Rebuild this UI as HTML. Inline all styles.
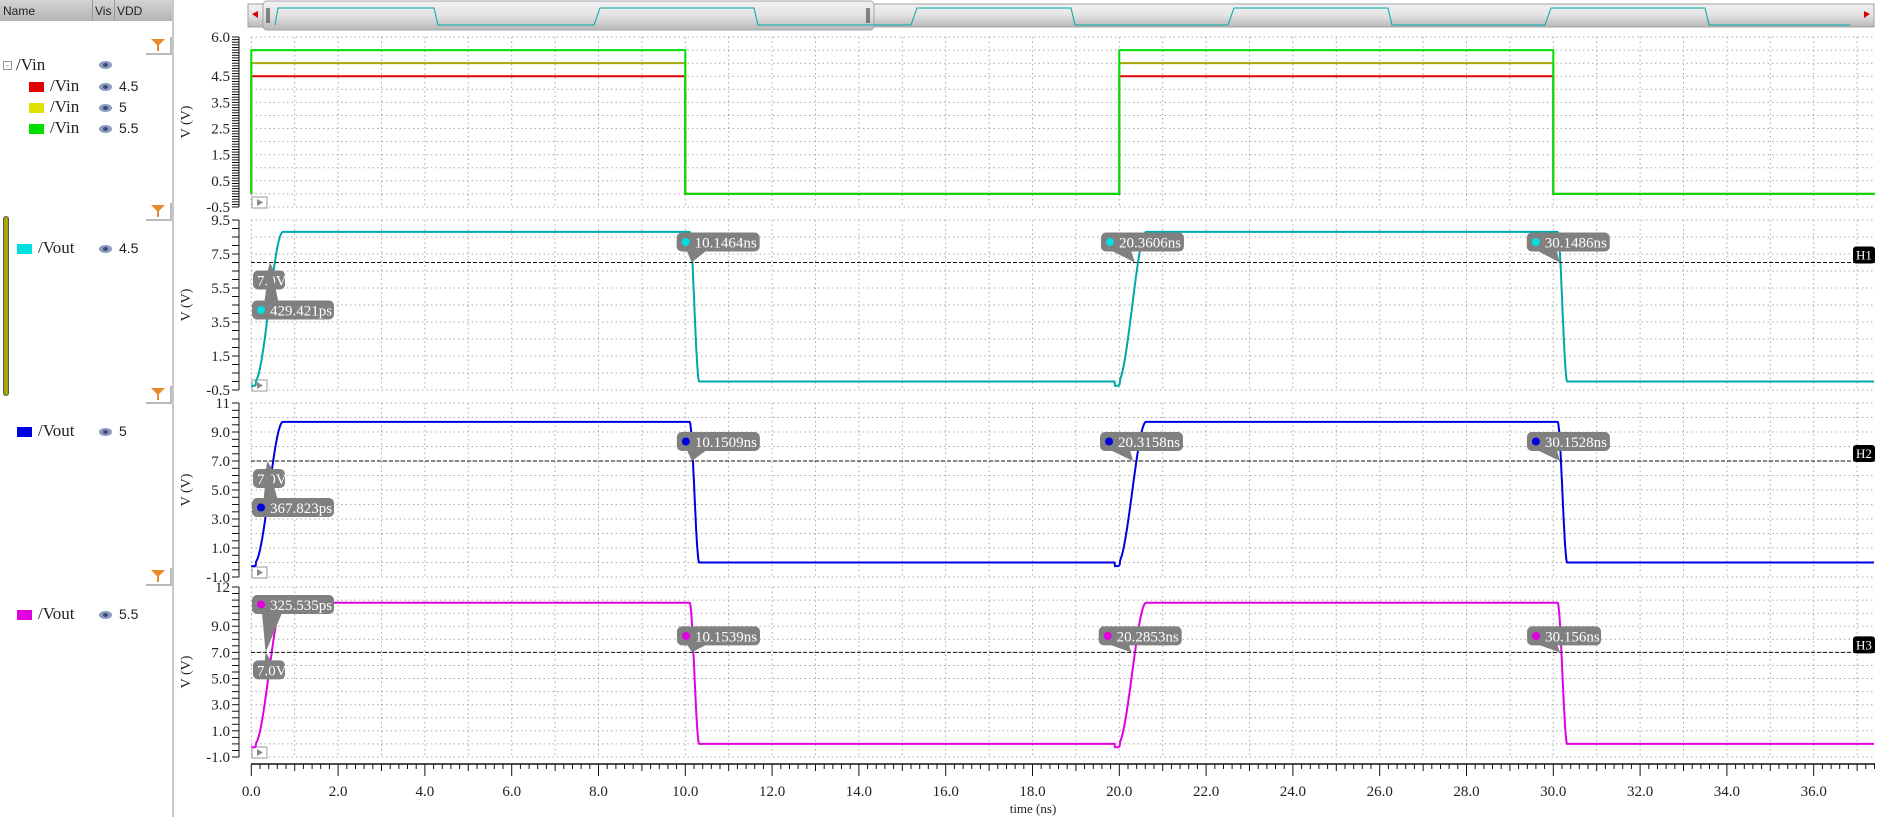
<!DOCTYPE html>
<html><head><meta charset="utf-8">
<style>
html,body{margin:0;padding:0;background:#fff;width:1902px;height:817px;overflow:hidden;position:relative}
#left{position:absolute;left:0;top:0;width:174px;height:817px;border-right:2px solid #c8c8c8;box-sizing:border-box}
#hdr{position:absolute;left:0;top:0;width:172px;height:21px;background:linear-gradient(#d4d4d4,#b4b4b4);font:12px "Liberation Sans",sans-serif;color:#222}
#hdr span{position:absolute;top:4px}
.t{position:absolute;font:17px "Liberation Serif",serif;color:#222}
.v{position:absolute;font:14px "Liberation Sans",sans-serif;color:#222}
.sw{position:absolute;width:15px;height:10px}
.eye{position:absolute;width:13px;height:8px;border-radius:50%;background:#8a9cc0}
.eye:after{content:"";position:absolute;left:4px;top:2px;width:5px;height:4px;border-radius:50%;background:#3c4c70}
.fun{position:absolute;width:24px;height:16px;border-right:2px solid #bbb;border-bottom:2px solid #bbb}
svg{position:absolute;left:0;top:0}
</style></head><body>
<div id="left">
<div id="hdr"><span style="left:3px">Name</span><span style="left:95px">Vis</span><span style="left:117px">VDD</span>
<div style="position:absolute;left:92px;top:0;width:1px;height:21px;background:#999"></div>
<div style="position:absolute;left:114px;top:0;width:1px;height:21px;background:#999"></div></div>
</div>
<svg width="1902" height="817" id="s" font-family="Liberation Serif, serif">
<g id="g"></g>
</svg>
<div class="t" style="left:16px;top:55px">/Vin</div>
<div style="position:absolute;left:3px;top:61px;width:7px;height:7px;border:1px solid #999;font:8px sans-serif;line-height:7px;text-align:center;color:#666">-</div>
<div class="eye" style="left:99px;top:61px"></div>
<div class="sw" style="left:29px;top:82px;background:#e00000"></div><div class="t" style="left:50px;top:76px">/Vin</div><div class="eye" style="left:99px;top:83px"></div><div class="v" style="left:119px;top:78px">4.5</div>
<div class="sw" style="left:29px;top:103px;background:#e0e000"></div><div class="t" style="left:50px;top:97px">/Vin</div><div class="eye" style="left:99px;top:104px"></div><div class="v" style="left:119px;top:99px">5</div>
<div class="sw" style="left:29px;top:124px;background:#00e000"></div><div class="t" style="left:50px;top:118px">/Vin</div><div class="eye" style="left:99px;top:125px"></div><div class="v" style="left:119px;top:120px">5.5</div>
<div style="position:absolute;left:3px;top:216px;width:4px;height:178px;background:#a8a800;border:1px solid #555;border-radius:3px"></div>
<div class="sw" style="left:17px;top:244px;background:#00e0e0"></div><div class="t" style="left:38px;top:238px">/Vout</div><div class="eye" style="left:99px;top:245px"></div><div class="v" style="left:119px;top:240px">4.5</div>
<div class="sw" style="left:17px;top:427px;background:#0000e0"></div><div class="t" style="left:38px;top:421px">/Vout</div><div class="eye" style="left:99px;top:428px"></div><div class="v" style="left:119px;top:423px">5</div>
<div class="sw" style="left:17px;top:610px;background:#e000e0"></div><div class="t" style="left:38px;top:604px">/Vout</div><div class="eye" style="left:99px;top:611px"></div><div class="v" style="left:119px;top:606px">5.5</div>
<script>
var S='',X=function(t){return 251.3+43.4*t};
function ln(x1,y1,x2,y2,c,w,d){S+='<line x1="'+x1+'" y1="'+y1+'" x2="'+x2+'" y2="'+y2+'" stroke="'+c+'" stroke-width="'+(w||1)+'"'+(d?' stroke-dasharray="'+d+'"':'')+'/>';}
function tx(x,y,s,a,sz,c){S+='<text x="'+x+'" y="'+y+'" font-size="'+(sz||14)+'" fill="'+(c||'#222')+'" text-anchor="'+(a||'start')+'">'+s+'</text>';}
S+='<defs><linearGradient id="sb" x1="0" y1="0" x2="0" y2="1"><stop offset="0" stop-color="#f2f2f2"/><stop offset="0.5" stop-color="#e2e2e2"/><stop offset="1" stop-color="#b8b8b8"/></linearGradient></defs>';
S+='<rect x="248" y="4" width="1626" height="23" fill="url(#sb)" stroke="#a0a0a0"/>';
S+='<rect x="263" y="1" width="611" height="29" rx="4" fill="url(#sb)" stroke="#a0a4ac"/>';
S+='<polygon points="252,14 258,11 258,18" fill="#d00"/><polygon points="1870,14 1864,11 1864,18" fill="#d00"/>';
ln(267,8,267,23,'#222');ln(269,8,269,23,'#222');ln(867,8,867,23,'#222');ln(869,8,869,23,'#222');
var rs=[275,597,914,1231,1548],fs=[436,756,1073,1390,1707],p='M275,25';
for(var i=0;i<5;i++){p+=' L'+(rs[i]+3)+',8 L'+(fs[i]-2)+',8 L'+(fs[i]+2)+',25';if(i<4)p+=' L'+(rs[i+1]-3)+',25';}
p+=' L1850,25';S+='<path d="'+p+'" fill="none" stroke="#00a8a8" stroke-width="1"/>';
var P=[{t:37,b:207,hi:6,lo:-0.5,st:0.5,lab:[6.0,4.5,3.5,2.5,1.5,0.5,-0.5]},
{t:220,b:390,hi:9.5,lo:-0.5,st:1,lab:[9.5,7.5,5.5,3.5,1.5,-0.5]},
{t:403,b:577,hi:11,lo:-1,st:1,lab:['11',9,7,5,3,1,-1]},
{t:587,b:757,hi:12,lo:-1,st:1,lab:['12',9,7,5,3,1,-1]}];
P.forEach(function(q){q.Y=function(v){return q.t+(q.hi-v)*(q.b-q.t)/(q.hi-q.lo)};
 for(var v=q.hi;v>=q.lo-1e-6;v-=q.st)ln(251,q.Y(v).toFixed(1),1875,q.Y(v).toFixed(1),'#aaa',1,'1.5,3');
 for(var t=0;t<=37.4;t+=1)ln(X(t).toFixed(1),q.t,X(t).toFixed(1),q.b,'#aaa',1,'1.5,3');
 ln(239,q.t,239,q.b,'#111');
 var mt=q.st/(q.st==0.5?5:2);
 for(var v=q.hi;v>=q.lo-1e-6;v-=mt){var y=q.Y(v).toFixed(1);ln(232,y,239,y,'#111');}
 q.lab.forEach(function(l){var v=typeof l=='string'?+l:l;var s=typeof l=='string'?l:v.toFixed(1);tx(230,q.Y(v)+5,s,'end',15);});
 S+='<text transform="translate(190,'+((q.t+q.b)/2)+') rotate(-90)" font-size="14" fill="#222" text-anchor="middle">V (V)</text>';
 S+='<rect x="252" y="'+(q.b-10)+'" width="15" height="11" fill="#fff" stroke="#999"/><polygon points="257,'+(q.b-8)+' 263,'+(q.b-4.5)+' 257,'+(q.b-1)+'" fill="#888"/>';
});
ln(251,764,1875,764,'#111',1.5);
for(var t=0;t<=37.4;t+=0.2){var x=X(t).toFixed(1),mj=Math.abs(t-Math.round(t))<1e-6;ln(x,764,x,mj?(Math.round(t)%2==0?776:771):769,'#111');}
for(var t=0;t<=36;t+=2)tx(X(t),796,t.toFixed(1),'middle',15);
tx(1033,813,'time (ns)','middle',13);
var a=P[0];
function vin(h,c){var Y=a.Y;S+='<path d="M'+X(0)+','+Y(0)+' L'+X(0)+','+Y(h)+' L'+X(10)+','+Y(h)+' L'+X(10)+','+Y(0)+' L'+X(20)+','+Y(0)+' L'+X(20)+','+Y(h)+' L'+X(30)+','+Y(h)+' L'+X(30)+','+Y(0)+' L1875,'+Y(0)+'" fill="none" stroke="'+c+'" stroke-width="2"/>';}
vin(4.5,'#e00000');vin(5,'#a8a800');vin(5.5,'#00e000');
function sm(x){x=Math.max(0,Math.min(1,x));return x*x*(3-2*x)}
function vout(q,H,c){var d='';for(var t=0;t<=37.4;t+=0.01){var v;
 if(t<10.08)v=H*sm((t-0.08)/0.65);else if(t<19.95)v=H*(1-sm((t-10.1)/0.22));else if(t<30.08)v=H*sm((t-19.97)/0.65);else v=H*(1-sm((t-30.1)/0.22));
 if(t<0.1||(t>19.9&&t<20.02))v-=0.25;
 d+=(d?' L':'M')+X(t).toFixed(1)+','+q.Y(v).toFixed(1);}
 S+='<path d="'+d+'" fill="none" stroke="'+c+'" stroke-width="2"/>';}
vout(P[1],8.8,'#00a8a8');vout(P[2],9.7,'#0000e0');vout(P[3],10.8,'#e000e0');
[[P[1],7,'H1'],[P[2],7,'H2'],[P[3],7,'H3']].forEach(function(h){var y=h[0].Y(7);ln(251,y,1875,y,'#111',1,'4,2');
 S+='<rect x="1853" y="'+(y-16)+'" width="22" height="17" rx="3" fill="#000"/>';tx(1864,y-3,h[2],'middle',13,'#fff');});
function box(x,y,w,txt,dot,px,py){S+='<polygon points="'+(x+10)+','+(y+18)+' '+(x+30)+','+(y+18)+' '+px+','+py+'" fill="#808080"/>';
 S+='<rect x="'+x+'" y="'+y+'" width="'+w+'" height="19" rx="5" fill="#808080"/>';
 if(dot)S+='<circle cx="'+(x+9)+'" cy="'+(y+9.5)+'" r="4" fill="'+dot+'"/>';
 tx(x+(dot?18:4),y+15,txt,'start',15,'#fff');}
var C=['#00e0e0','#0000e0','#e000e0'];
[[P[1],[[10.1464,'10.1464ns',-15],[20.3606,'20.3606ns',-34],[30.1486,'30.1486ns',-33]],-30],
 [P[2],[[10.1509,'10.1509ns',-15],[20.3158,'20.3158ns',-33],[30.1528,'30.1528ns',-33]],-29],
 [P[3],[[10.1539,'10.1539ns',-15],[20.2853,'20.2853ns',-33],[30.156,'30.156ns',-33]],-26]].forEach(function(r,k){
 var y=r[0].Y(7);r[1].forEach(function(m){var x=X(m[0]);box(x+m[2],y+r[2],m[1]=='30.156ns'?74:83,m[1],C[k],x,y);});});
box(253,P[1].Y(7)+8,32,'7.0V',null,X(0.43),P[1].Y(7));
box(252,P[1].Y(7)+38,82,'429.421ps',C[0],X(0.43),P[1].Y(7));
box(253,P[2].Y(7)+8,32,'7.0V',null,X(0.37),P[2].Y(7));
box(252,P[2].Y(7)+37,82,'367.823ps',C[1],X(0.37),P[2].Y(7));
box(253,P[3].Y(7)+8,32,'7.0V',null,X(0.33),P[3].Y(7));
box(252,595,82,'325.535ps',C[2],X(0.33),P[3].Y(7));
document.getElementById('g').innerHTML=S;
</script>
<div class="fun" style="left:146px;top:37px"><svg width="24" height="16" style="position:absolute;left:0;top:0"><polygon points="5,2 19,2 13,8 13,14 11,14 11,8" fill="#e88a2c"/></svg></div>
<div class="fun" style="left:146px;top:203px"><svg width="24" height="16" style="position:absolute;left:0;top:0"><polygon points="5,2 19,2 13,8 13,14 11,14 11,8" fill="#e88a2c"/></svg></div>
<div class="fun" style="left:146px;top:386px"><svg width="24" height="16" style="position:absolute;left:0;top:0"><polygon points="5,2 19,2 13,8 13,14 11,14 11,8" fill="#e88a2c"/></svg></div>
<div class="fun" style="left:146px;top:568px"><svg width="24" height="16" style="position:absolute;left:0;top:0"><polygon points="5,2 19,2 13,8 13,14 11,14 11,8" fill="#e88a2c"/></svg></div>
</body></html>
